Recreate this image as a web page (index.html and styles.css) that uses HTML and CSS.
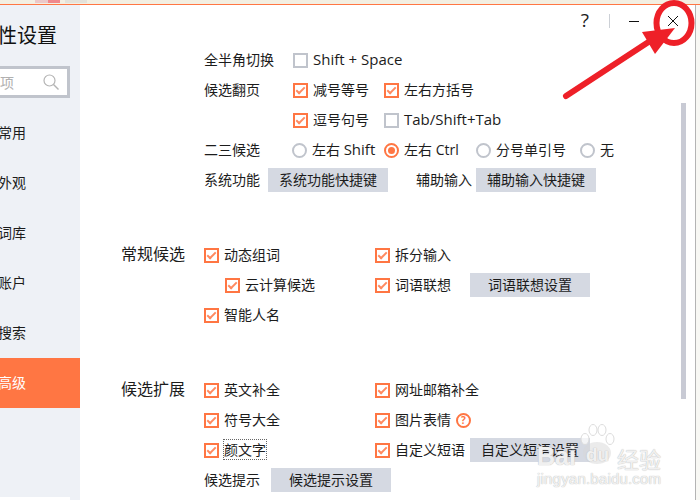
FILE: index.html
```html
<!DOCTYPE html>
<html>

<head>
    <title>属性设置</title>
    <meta charset="utf-8">
    <link rel="stylesheet" href="styles.css">
</head>

<body>
    <div class="ime-strip">
        <span class="ime-strip-a"></span>
        <span class="ime-strip-b"></span>
        <span class="ime-strip-c"></span>
    </div>
    <div class="ime-window">
        <div class="ime-side">
            <h2>属性设置</h2>
            <div class="ime-search">
                <span>搜索选项</span>
                <svg width="16" height="16" viewBox="0 0 16 16" fill="none" stroke="#b4b4b4">
                    <circle cx="6.5" cy="6.5" r="5.5" stroke-width="1.2" />
                    <path d="M10.5 10.5L15.5 15.5" stroke-width="1.4" />
                </svg>
            </div>
            <ul class="ime-nav">
                <li>常用</li>
                <li>外观</li>
                <li>词库</li>
                <li>账户</li>
                <li>搜索</li>
                <li class="active">高级</li>
            </ul>
            <div class="ime-side-end"></div>
        </div>
        <div class="ime-main">
            <div class="ime-title">
                <span class="ime-help">?</span>
                <span class="ime-sep"></span>
                <svg class="ime-min" width="12" height="12" viewBox="0 0 12 12" stroke="#111">
                    <path d="M1 6.5H11" />
                </svg>
                <svg class="ime-close" width="12" height="12" viewBox="0 0 12 12" stroke="#111">
                    <path d="M1 1L11 11M11 1L1 11" />
                </svg>
            </div>

            <div class="ime-group">
                <div class="ime-row">
                    <span class="ime-label">全半角切换</span>
                    <label class="ime-check"><i class="box"></i><span class="lat">Shift + Space</span></label>
                </div>
                <div class="ime-row">
                    <span class="ime-label">候选翻页</span>
                    <label class="ime-check cell"><i class="box on"></i><span>减号等号</span></label>
                    <label class="ime-check"><i class="box on"></i><span>左右方括号</span></label>
                </div>
                <div class="ime-row">
                    <span class="ime-label"></span>
                    <label class="ime-check cell"><i class="box on"></i><span>逗号句号</span></label>
                    <label class="ime-check"><i class="box"></i><span class="lat">Tab/Shift+Tab</span></label>
                </div>
                <div class="ime-row">
                    <span class="ime-label narrow">二三候选</span>
                    <label class="ime-radio"><i class="dot"></i><span>左右 <b class="lat">Shift</b></span></label>
                    <label class="ime-radio"><i class="dot on"></i><span>左右 Ctrl</span></label>
                    <label class="ime-radio long"><i class="dot"></i><span>分号单引号</span></label>
                    <label class="ime-radio"><i class="dot"></i><span>无</span></label>
                </div>
                <div class="ime-row">
                    <span class="ime-name fixed">系统功能</span>
                    <button class="ime-btn">系统功能快捷键</button>
                    <span class="ime-name aux">辅助输入</span>
                    <button class="ime-btn">辅助输入快捷键</button>
                </div>
            </div>

            <div class="ime-section">
                <h3>常规候选</h3>
                <div class="ime-grid">
                    <div class="ime-row">
                        <label class="ime-check wide"><i class="box on"></i><span>动态组词</span></label>
                        <label class="ime-check"><i class="box on"></i><span>拆分输入</span></label>
                    </div>
                    <div class="ime-row">
                        <label class="ime-check wide nested"><i class="box on"></i><span>云计算候选</span></label>
                        <label class="ime-check"><i class="box on"></i><span>词语联想</span></label>
                        <button class="ime-btn assoc">词语联想设置</button>
                    </div>
                    <div class="ime-row">
                        <label class="ime-check wide"><i class="box on"></i><span>智能人名</span></label>
                    </div>
                </div>
            </div>

            <div class="ime-section">
                <h3>候选扩展</h3>
                <div class="ime-grid">
                    <div class="ime-row">
                        <label class="ime-check wide"><i class="box on"></i><span>英文补全</span></label>
                        <label class="ime-check"><i class="box on"></i><span>网址邮箱补全</span></label>
                    </div>
                    <div class="ime-row">
                        <label class="ime-check wide"><i class="box on"></i><span>符号大全</span></label>
                        <label class="ime-check"><i class="box on"></i><span>图片表情</span></label>
                        <span class="ime-tip">?</span>
                    </div>
                    <div class="ime-row">
                        <label class="ime-check wide"><i class="box on"></i><span class="focus">颜文字</span></label>
                        <label class="ime-check"><i class="box on"></i><span>自定义短语</span></label>
                        <button class="ime-btn phrase">自定义短语设置</button>
                    </div>
                    <div class="ime-row">
                        <span class="ime-name">候选提示</span>
                        <button class="ime-btn hint">候选提示设置</button>
                    </div>
                </div>
            </div>
        </div>
        <div class="ime-scroll"><span></span></div>
    </div>

    <svg class="ime-arrow" width="700" height="500" viewBox="0 0 700 500">
        <ellipse cx="674" cy="23" rx="17.5" ry="20" fill="none" stroke="#ee2028" stroke-width="6" />
        <path d="M566 96L650 41" stroke="#ee2028" stroke-width="6" stroke-linecap="round" />
        <path d="M675 28L642 32L655 54Z" fill="#ee2028" />
    </svg>

    <div class="ime-mark">
        <svg class="paw" width="38" height="42" viewBox="0 0 38 42" fill="rgba(255,255,255,.7)" stroke="#dcdcdc">
            <ellipse cx="7" cy="15" rx="4" ry="5.5" />
            <ellipse cx="15" cy="6" rx="4" ry="5.5" />
            <ellipse cx="24" cy="6" rx="4" ry="5.5" />
            <ellipse cx="32" cy="15" rx="4" ry="5.5" />
            <ellipse cx="19" cy="29" rx="14" ry="11" fill="rgba(215,215,215,.5)" stroke="none" />
        </svg>
        <span class="bai">Bai</span>
        <span class="du">du</span>
        <span class="jy">经验</span>
        <span class="url">jingyan.baidu.com</span>
    </div>
</body>

</html>
```

FILE: styles.css
```css
html,
body {
    margin: 0;
    height: 100%;
    overflow: hidden;
}

body {
    position: relative;
    background-color: #f8f8f4;
    font-family: "Open Sans", "Noto Sans CJK SC", sans-serif;
    font-size: 14px;
    color: #1c1c1c;
}

/* strip of the desktop above the window */
.ime-strip {
    display: flex;
    height: 4px;
    background-color: #f3efe2;
    border-bottom: 1px solid #ff7643;
}

.ime-strip span {
    display: block;
    height: 3px;
}

.ime-strip-a {
    width: 13px;
    margin-left: 35px;
    background-color: #ecc8c8;
}

.ime-strip-b {
    width: 12px;
    background-color: #f0888c;
}

.ime-strip-c {
    width: 22px;
    margin-left: 5px;
    background-color: #e4e2da;
}

.ime-window {
    display: flex;
    width: 696px;
    height: 495px;
    box-sizing: border-box;
    background-color: #fff;
    border-right: 1px solid #b4b4b4;
}

.ime-side {
    display: flex;
    flex-direction: column;
    flex: none;
    width: 80px;
    overflow: hidden;
    background-color: #eef1f6;
}

.ime-side h2 {
    margin: 16px 0 0 -23px;
    width: 120px;
    font-size: 20px;
    font-weight: 400;
    line-height: 30px;
    color: #111;
}

.ime-search {
    display: flex;
    align-items: center;
    flex: none;
    width: 130px;
    height: 32px;
    box-sizing: border-box;
    margin: 15px 0 0 -60px;
    padding: 0 8px 0 15px;
    background-color: #fff;
    border: 3px solid #c0c4cc;
    color: #b0b0b0;
}

.ime-search span {
    flex: none;
}

.ime-search svg {
    margin-left: auto;
}

.ime-nav {
    margin: 10px 0 0;
    padding: 0;
    list-style: none;
}

.ime-nav li {
    height: 50px;
    line-height: 50px;
    margin-left: -2px;
}

.ime-nav li.active {
    margin-left: 0;
    text-indent: -2px;
    background-color: #ff7643;
    color: #fff;
}

.ime-side-end {
    flex: none;
    width: 70px;
    height: 3px;
    margin-top: auto;
    background-color: #fff;
}

.ime-main {
    flex: 1;
    min-width: 0;
}

.ime-title {
    display: flex;
    align-items: center;
    justify-content: flex-end;
    height: 40px;
    box-sizing: border-box;
    padding: 0 2px 8px 0;
}

.ime-help {
    margin-top: -2px;
    font-size: 19px;
    font-weight: 400;
    line-height: 26px;
}

.ime-sep {
    width: 1px;
    height: 14px;
    margin-left: 20px;
    background-color: #ccd0d6;
}

.ime-min {
    margin-left: 18px;
}

.ime-close {
    margin-left: 27px;
}

.ime-group {
    margin-left: 124px;
}

.ime-row {
    display: flex;
    align-items: center;
    height: 30px;
    white-space: nowrap;
}

/* text sits a pixel above the middle of its row */
.ime-label,
.ime-name,
.ime-check span,
.ime-radio span {
    padding-bottom: 2px;
}

.ime-label {
    flex: none;
    width: 89px;
}

.ime-label.narrow {
    width: 88px;
}

.lat {
    font-size: 15px;
    font-weight: 400;
}

.ime-check,
.ime-radio {
    display: flex;
    align-items: center;
    gap: 5px;
}

.ime-radio {
    width: 92px;
}

.ime-radio.long {
    width: 104px;
}

.ime-check.cell {
    width: 91px;
}

.ime-check.wide {
    width: 171px;
}

.ime-check.nested {
    box-sizing: border-box;
    padding-left: 21px;
}

.box {
    display: flex;
    align-items: center;
    justify-content: center;
    flex: none;
    width: 15px;
    height: 15px;
    box-sizing: border-box;
    border: 2px solid #c0c4cc;
}

.box.on {
    border-color: #ff7643;
}

.box.on::after {
    content: "";
    width: 7px;
    height: 3px;
    margin-top: -2px;
    border-left: 2px solid #ff8a60;
    border-bottom: 2px solid #ff8a60;
    transform: rotate(-45deg);
}

.dot {
    display: flex;
    align-items: center;
    justify-content: center;
    flex: none;
    width: 15px;
    height: 15px;
    box-sizing: border-box;
    border: 2px solid #c0c4cc;
    border-radius: 50%;
}

.dot.on {
    border-color: #ff7643;
}

.dot.on::after {
    content: "";
    width: 7px;
    height: 7px;
    border-radius: 50%;
    background-color: #ff7643;
}

.ime-check .focus {
    padding-bottom: 0;
    margin-bottom: 2px;
    outline: 1px dotted #666;
    line-height: 19px;
}

.ime-btn {
    flex: none;
    width: 120px;
    height: 24px;
    padding: 0 0 2px;
    border: 0;
    background-color: #d5d9e2;
    font: inherit;
    color: #1c1c1c;
}

.ime-name.fixed {
    margin-right: 8px;
}

.ime-name.aux {
    margin: 0 4px 0 28px;
}

.ime-btn.assoc {
    margin-left: 19px;
}

.ime-btn.phrase {
    margin-left: 5px;
}

.ime-btn.hint {
    margin-left: 11px;
}

.ime-tip {
    width: 15px;
    height: 15px;
    box-sizing: border-box;
    margin-left: 5px;
    border: 2px solid #ff7643;
    border-radius: 50%;
    font-size: 10px;
    font-weight: 700;
    line-height: 11px;
    text-align: center;
    color: #ff7643;
}

.ime-section {
    display: flex;
    margin: 45px 0 0 41px;
}

.ime-section h3 {
    flex: none;
    width: 83px;
    margin: 0;
    font-size: 16px;
    font-weight: 400;
    line-height: 29px;
}

.ime-scroll {
    flex: none;
    width: 14px;
    padding-top: 98px;
}

.ime-scroll span {
    display: block;
    width: 5px;
    height: 296px;
    background-color: #c8cad4;
}

.ime-arrow {
    position: absolute;
    left: 0;
    top: 0;
}

/* baidu watermark over the bottom right corner */
.ime-mark {
    position: absolute;
    left: 530px;
    top: 420px;
    width: 150px;
    height: 70px;
    color: rgba(255, 255, 255, .8);
    text-shadow: 0 0 1px #bbb, 0 0 1px #ccc;
    font-family: "Liberation Sans", sans-serif;
    font-weight: 700;
}

.ime-mark span {
    position: absolute;
    white-space: nowrap;
}

.ime-mark .paw {
    position: absolute;
    left: 48px;
    top: 4px;
}

.ime-mark .bai {
    left: 7px;
    top: 22px;
    font-size: 25px;
}

.ime-mark .du {
    left: 56px;
    top: 24px;
    font-size: 19px;
}

.ime-mark .jy {
    left: 87px;
    top: 22px;
    font-family: "Noto Sans CJK SC", sans-serif;
    font-size: 22px;
    font-weight: 400;
}

.ime-mark .url {
    left: 7px;
    top: 50px;
    font-size: 15px;
    font-weight: 400;
    letter-spacing: .2px;
}
```
